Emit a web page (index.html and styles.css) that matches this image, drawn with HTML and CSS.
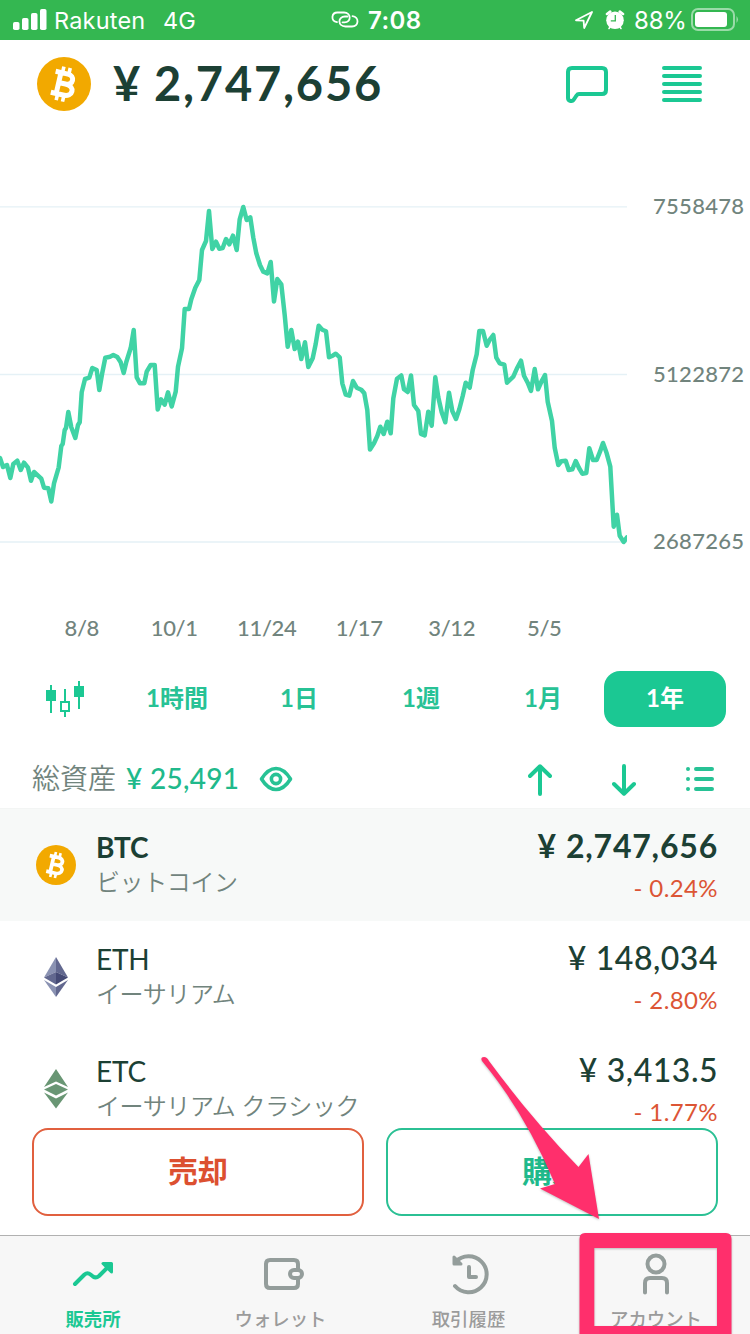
FILE: index.html
```html
<!DOCTYPE html>
<html lang="ja">
<head>
<meta charset="utf-8">
<meta name="viewport" content="width=750">
<title>販売所</title>
<link rel="stylesheet" href="styles.css">
</head>
<body>
<svg class="defs" width="0" height="0" aria-hidden="true">
  <symbol id="btc" viewBox="0 0 54 54">
    <circle cx="27" cy="27" r="27" fill="#f2a900"/>
    <g transform="rotate(13 27 27)" fill="none" stroke="#fff" stroke-width="5">
      <path d="M16 16.500H28.500C36.500 16.500 36.500 26.700 28.500 26.700H22.500M28.500 26.700C39 26.700 39 38 28.500 38H16M21.500 16.500V38"/>
      <path d="M23 10V16M29.500 10V16M23 38V44.500M29.500 38V44.500" stroke-width="3.600"/>
    </g>
  </symbol>
</svg>
<main class="screen">
  <header class="status">
    <div class="status-left">
      <svg width="34" height="22" viewBox="0 0 34 22" fill="#fff"><rect x="0" y="13" width="6.500" height="8" rx="1.800"/><rect x="9" y="9" width="6.500" height="12" rx="1.800"/><rect x="18" y="4" width="6.500" height="17" rx="1.800"/><rect x="27" y="0" width="6.500" height="21" rx="1.800"/></svg>
      <span class="carrier">Rakuten</span><span class="network">4G</span>
    </div>
    <div class="status-mid">
      <svg width="28" height="18" viewBox="0 0 28 18" fill="none" stroke="#fff" stroke-width="1.800" stroke-linecap="round"><path d="M6 11.200C-.5 10 .2 1.500 6.500 1.500H13C20.500 1.500 20.500 11.300 13.500 11.300H11.500"/><path d="M21.500 5.200C28.500 6 28 15.500 21 15.500H14.500C6.500 15.500 6.500 5.500 14 5.500H16.500"/></svg>
      <span class="time">7:08</span>
    </div>
    <div class="status-right">
      <svg class="loc" width="18" height="18" viewBox="0 0 18 18" fill="none" stroke="#fff" stroke-width="1.800" stroke-linejoin="round"><path d="M17 1L1 9.300L8.600 9.600L9.200 17Z"/></svg>
      <svg class="alarm" width="20" height="20" viewBox="0 0 20 20"><g stroke="#fff" stroke-width="2.600" stroke-linecap="round"><path d="M2 4L5.200 1.600M18 4L14.800 1.600"/><path d="M4 18.500L5.500 16.500M16 18.500L14.500 16.500" stroke-width="1.600"/></g><circle cx="10" cy="10.300" r="8.800" fill="#fff"/><path d="M10.300 5V10.800H5.800" fill="none" stroke="#34b751" stroke-width="1.300"/></svg>
      <span class="percent">88%</span>
      <svg width="48" height="24" viewBox="0 0 48 24"><rect x="1" y="1" width="42" height="21" rx="6" fill="none" stroke="#fff" stroke-opacity=".5" stroke-width="2"/><rect x="4" y="4" width="32" height="15" rx="3" fill="#fff"/><path d="M45.500 8Q48.500 11.500 45.500 15Z" fill="#fff" fill-opacity=".5"/></svg>
    </div>
  </header>

  <section class="headline">
    <svg class="coin-lg"><use href="#btc"/></svg>
    <div class="price"><span class="yen">¥</span><span class="amount">2,747,656</span></div>
    <svg class="chat" width="44" height="38" viewBox="0 0 44 38" fill="none" stroke="#1bc893" stroke-width="4" stroke-linejoin="round"><path d="M7 3H37Q41 3 41 7V25Q41 29 37 29H14Q12.500 29 11.500 30.500L8.500 35Q7.500 36.200 5.500 36Q3 35.500 3 33V7Q3 3 7 3Z"/></svg>
    <svg width="40" height="36" viewBox="0 0 40 36" stroke="#1bc893" stroke-width="4" stroke-linecap="round"><path d="M2 2H38M2 10H38M2 18H38M2 26H38M2 34H38"/></svg>
  </section>

  <section class="chart">
    <svg width="627" height="370" viewBox="0 190 627 370" fill="none">
      <path d="M0 206.800H627M0 374.500H627M0 542H627" stroke="#e5f1f6" stroke-width="1.300"/>
      <polyline stroke="#40d3a5" stroke-width="4.500" stroke-linejoin="round" stroke-linecap="round" points="0,458 3,467 7,465 10.300,478 13.300,464 17.300,460.700 20.700,470 24,462.700 28,467.700 31,480.700 34,472 41.300,478.700 44,487.700 48.300,488.300 51.300,501.500 54,483.300 58.700,467.300 61.300,446 62.700,444 64.700,430 66,428 68.300,412 71.300,427.300 75.300,438 78,425 79.700,422.300 81.700,392.300 85,379 89.300,377.700 92.300,368 96.700,370 99.300,390 102.300,372.700 105.300,357.700 110,356.700 113.300,355 117.300,357 120.700,362.300 123.700,373 126.300,362 130.700,348 133.700,330 136.700,377.300 140,383.300 144.300,383.300 146.700,371.700 150.700,365 154.700,365 157.700,409.500 161,399.300 164.700,404.700 168,392.300 171.700,406.500 175.700,391.700 178,366.700 182,348.300 184.700,309 189,309 191.300,299.300 195.300,287.700 199.300,280 202,250 206,241 209,211 212.300,249 216,241.700 219.300,248.700 222.700,248 226,239 229.300,244.300 233,235.700 236.700,250 239.700,219.300 243.300,207 246.700,220 250.300,217.300 253.300,237.700 256.300,253.300 260,265 263.300,271.700 267.300,273.300 270.700,262 274,301.500 277.300,279 281.300,284.300 284.700,315 287.700,346.700 291.300,330 294.700,349 298,341.700 301.300,359 305,342.300 308.300,367 312.700,358.300 315.700,344 318.700,325.700 322.300,329.700 326,331.300 329,357.300 332.700,355.700 335.700,353.700 339.700,357.300 342.300,383.300 345.700,394.700 349.300,395.700 353,381 356.700,387.700 361.300,389.700 364.300,393.300 367.300,410 370,449.500 374,443.300 377.300,436 380.300,426.700 383.700,434 387.300,421.700 390.700,433.300 393.300,398.300 397,378.700 401.300,375.500 404,389.300 407.700,392 411,375.500 414,405 418.300,411 421,434 424.700,435.500 428.300,411.700 431.700,425.700 435.300,377.300 438.300,397.300 441.700,412.300 445.300,422.300 449,392.700 452.300,411 456,419 459.300,409.300 462.700,396 465.700,382.700 469.700,387.700 472.700,370 476.700,354.300 479.300,331 483,331 486.700,345.700 490,339.300 493.300,335 496.300,357.700 499.700,363.300 504.300,364.700 507,382.700 513.300,376.700 517.300,367.700 521,360.700 524,375.700 527.700,382.700 531,391 534.700,369 538,389.300 541.700,381 545,375 547.700,401.700 552,421 554.700,447.700 558.300,465 561.300,461.300 565.700,460.700 568.700,470 572.300,469.300 575.700,461 579,468 582.300,473.700 586.300,473 589.300,448.300 593,460 596.700,460 600,451.700 603,443 606.700,453.300 610.300,466.700 613.700,526.700 617,514.700 619.700,535.700 623.700,542 627,537.300"/>
    </svg>
    <div class="y-axis"><span>7558478</span><span>5122872</span><span>2687265</span></div>
  </section>
  <div class="x-axis"><span>8/8</span><span>10/1</span><span>11/24</span><span>1/17</span><span>3/12</span><span>5/5</span></div>

  <nav class="periods">
    <a class="candle"><svg width="40" height="36" viewBox="0 0 40 36" fill="#1bc893"><path d="M1 9H11V20H7V32H5V20H1ZM5 4H7V9H5Z"/><path d="M19 8H21V20H25V31H21V36H19V31H15V20H19ZM17 22V29H23V22Z" fill-rule="evenodd"/><path d="M33 0H35V5H39V16H35V28H33V16H29V5H33Z"/></svg></a>
    <a>1時間</a><a>1日</a><a>1週</a><a>1月</a><a class="on">1年</a>
  </nav>

  <section class="assets">
    <span class="assets-label">総資産</span>
    <span class="assets-value">¥ 25,491</span>
    <svg class="eye" width="34" height="26" viewBox="0 0 34 26" fill="none" stroke="#27c295" stroke-width="3.600"><path d="M2.500 13Q9 2.500 17 2.500T31.500 13Q25 23.500 17 23.500T2.500 13Z" stroke-linejoin="round"/><circle cx="17" cy="13" r="4.600"/></svg>
    <svg class="up" width="24" height="32" viewBox="0 0 24 32" fill="none" stroke="#1bc893" stroke-width="4" stroke-linecap="round" stroke-linejoin="round"><path d="M12 30V2.500M2 12L12 2.300L22 12"/></svg>
    <svg class="down" width="24" height="32" viewBox="0 0 24 32" fill="none" stroke="#1bc893" stroke-width="4" stroke-linecap="round" stroke-linejoin="round"><path d="M12 2V29.500M2 20L12 29.700L22 20"/></svg>
    <svg width="30" height="26" viewBox="0 0 30 26" stroke="#27c295" stroke-width="4" stroke-linecap="round"><path d="M3 3H3.010M3 13H3.010M3 23H3.010M11 3H27M11 13H27M11 23H27"/></svg>
  </section>

  <section class="coins">
    <article class="coin selected">
      <svg class="coin-icon"><use href="#btc"/></svg>
      <div class="name"><b>BTC</b><span>ビットコイン</span></div>
      <div class="quote"><b><i>¥</i>2,747,656</b><span>- 0.24%</span></div>
    </article>
    <article class="coin">
      <svg class="coin-icon" viewBox="0 0 40 40"><path d="M20 0L8 20.500L20 15Z" fill="#8a92b2"/><path d="M20 0L32 20.500L20 15Z" fill="#62688f"/><path d="M8 20.500L20 15V27.500Z" fill="#62688f"/><path d="M32 20.500L20 15V27.500Z" fill="#454a75"/><path d="M8 23L20 30V40Z" fill="#8a92b2"/><path d="M32 23L20 30V40Z" fill="#62688f"/></svg>
      <div class="name"><b>ETH</b><span>イーサリアム</span></div>
      <div class="quote"><b><i>¥</i>148,034</b><span>- 2.80%</span></div>
    </article>
    <article class="coin">
      <svg class="coin-icon" viewBox="0 0 40 40" fill="#699674"><path d="M20 0L32 18L20 12.500L8 18ZM20 15L32 20.500L20 26.500L8 20.500ZM8 23.500L20 29.500L32 23.500L20 39.500Z"/></svg>
      <div class="name"><b>ETC</b><span>イーサリアム クラシック</span></div>
      <div class="quote"><b><i>¥</i>3,413.5</b><span>- 1.77%</span></div>
    </article>
  </section>

  <section class="actions"><button class="sell">売却</button><button class="buy">購入</button></section>

  <footer class="tabs">
    <a class="tab active"><svg width="44" height="44" viewBox="0 0 44 44" fill="none" stroke="#1bc893" stroke-width="4" stroke-linecap="round" stroke-linejoin="round"><path d="M4 33L13.500 23.500Q16.500 21 19.500 23.500L22 25.500Q25 27.500 28 25L38 15"/><path d="M32 12.500H40.500V21Z" fill="#1bc893" stroke-width="3"/></svg><span>販売所</span></a>
    <a class="tab"><svg width="48" height="44" viewBox="-2 0 48 44" fill="none" stroke="#949d9b" stroke-width="4"><path d="M39 18.500V13Q39 9 35 9H11Q7 9 7 13V33Q7 37 11 37H35Q39 37 39 33V27.500"/><rect x="31" y="19" width="12" height="8" rx="4"/></svg><span>ウォレット</span></a>
    <a class="tab"><svg width="44" height="44" viewBox="0 0 44 44" fill="none" stroke="#949d9b" stroke-width="4" stroke-linecap="round" stroke-linejoin="round"><path d="M8 35A18 18 0 1 0 8.500 11"/><path d="M7 6V13H14Z" fill="#949d9b" stroke-width="3"/><path d="M22 16V26H29"/></svg><span>取引履歴</span></a>
    <a class="tab"><svg width="44" height="44" viewBox="0 0 44 44" fill="none" stroke="#949d9b" stroke-width="4" stroke-linecap="round"><circle cx="22" cy="13" r="8.500"/><path d="M11 41.500V32Q11 27 16 27H28Q33 27 33 32V41.500"/></svg><span>アカウント</span></a>
  </footer>

  <svg class="marker" width="260" height="290" viewBox="475 1044 260 290">
    <path d="M482 1061Q480 1057 484 1057Q487 1057 489 1061Q531 1118 578.500 1167L588.500 1154L599 1219L540 1188.500L555 1184Q525 1113 482 1061Z" fill="#ff2f6c"/>
    <path d="M585 1233H726Q731.500 1233 731.500 1239V1334H579.500V1239Q579.500 1233 585 1233ZM594.300 1248V1326H717V1248Z" fill="#ff2f6c" fill-rule="evenodd"/>
  </svg>
</main>
</body>
</html>
```
FILE: styles.css
```css
* { box-sizing: border-box; }
body { margin: 0; background: #fff; }
svg { display: block; flex: none; }
.defs { position: absolute; }
.screen {
  position: relative;
  width: 750px;
  height: 1334px;
  overflow: hidden;
  display: flex;
  flex-direction: column;
  font-family: Lato, "Noto Sans CJK JP", sans-serif;
  color: #1c4034;
  white-space: nowrap;
}

.status {
  height: 40px;
  flex: none;
  background: #34b751;
  color: #fff;
  font: 400 24px/40px Inter, sans-serif;
  display: grid;
  grid-template-columns: 331px 1fr 175px;
}
.status-left, .status-mid, .status-right { display: flex; align-items: center; }
.status span { padding-top: 2px; line-height: 38px; }
.status-left { padding-left: 13px; }
.carrier { margin-left: 7px; width: 109px; font-size: 23.500px; letter-spacing: .2px; }
.network { font-size: 23.500px; }
.time { margin-left: 9px; font-weight: 600; letter-spacing: .4px; }
.alarm { margin-left: 12px; }
.percent { margin-left: 9px; width: 51px; letter-spacing: -.2px; }
.status-right svg:last-child { margin-left: 6px; }

.headline {
  height: 88px;
  flex: none;
  display: flex;
  align-items: center;
  padding: 0 48px 0 37px;
}
.coin-lg { width: 54px; height: 54px; }
.price {
  flex: 1;
  display: flex;
  padding: 0 0 3px 22px;
  font-size: 47px;
  line-height: 54px;
  font-weight: 700;
}
.yen { width: 41px; }
.amount { letter-spacing: 1.800px; }
.chat { margin-right: 53px; }

.chart { height: 370px; margin-top: 62px; flex: none; display: flex; }
.y-axis {
  height: 366px;
  padding: 1px 0 0 26px;
  display: flex;
  flex-direction: column;
  justify-content: space-between;
  font-size: 22px;
  line-height: 30px;
  letter-spacing: .3px;
  font-weight: 500;
  color: #71847d;
}
.x-axis {
  height: 36px;
  margin: 50px 0 0 35.500px;
  flex: none;
  display: grid;
  grid-template-columns: repeat(6, 92.500px);
  text-align: center;
  font-size: 22px;
  line-height: 36px;
  letter-spacing: -.3px;
  font-weight: 500;
  color: #71847d;
}

.periods {
  height: 56px;
  margin: 25px 24px 0 0;
  flex: none;
  display: grid;
  grid-template-columns: 116px repeat(5, 122px);
  font-size: 24px;
  line-height: 54px;
  font-weight: 700;
  color: #27c295;
  text-align: center;
}
.candle { padding: 10px 0 0 45px; }
.on { color: #fff; background: #1bc893; border-radius: 16px; }

.assets {
  height: 82px;
  flex: none;
  display: flex;
  align-items: center;
  padding: 22px 35px 0 32px;
  border-bottom: 1px solid #f3f5f4;
}
.assets-label, .assets-value { font-size: 28px; line-height: 38px; padding-bottom: 2px; }
.assets-label { color: #71847d; font-weight: 350; width: 94px; }
.assets-value { color: #20b98b; font-weight: 500; letter-spacing: .3px; width: 133px; }
.up { margin: 2px 0 0 auto; }
.down { margin: 2px 49px 0 60px; }

.coins { height: 319px; overflow: hidden; flex: none; }
.coin { height: 112px; display: flex; padding: 0 32px 0 36px; }
.selected { background: #f7f9f8; }
.coin-icon { width: 40px; height: 40px; margin: 36px 20px 0 0; }
.name { flex: 1; display: flex; flex-direction: column; }
.name b { font-size: 28px; line-height: 34px; margin-top: 21px; font-weight: 400; letter-spacing: -.2px; }
.selected .name b { font-weight: 700; }
.name span { font-size: 24px; line-height: 34px; margin-top: 1px; font-weight: 350; letter-spacing: -.4px; color: #71847d; }
.quote { display: flex; flex-direction: column; align-items: flex-end; }
.quote b { font-size: 32px; line-height: 38px; margin-top: 18px; font-weight: 500; letter-spacing: .5px; }
.quote i { font-style: normal; margin-right: 9px; }
.selected .quote b { font-weight: 700; letter-spacing: .8px; }
.quote span { font-size: 24px; line-height: 30px; margin-top: 8px; letter-spacing: .4px; color: #dc5535; }

.actions { height: 107px; flex: none; padding: 0 32px; display: flex; gap: 22px; }
.actions button {
  flex: 1;
  height: 88px;
  padding: 0 0 6px;
  background: #fff;
  border: 2px solid;
  border-radius: 16px;
  font: 700 30px/40px "Noto Sans CJK JP", sans-serif;
}
.actions .sell { color: #dc5030; border-color: #e1603f; }
.actions .buy { color: #20b98b; border-color: #2bc094; }

.tabs {
  height: 99px;
  flex: none;
  background: #f7f7f7;
  border-top: 1px solid #b1b1b1;
  display: grid;
  grid-template-columns: 186px 189px 187px 188px;
}
.tab { display: flex; flex-direction: column; align-items: center; padding-top: 15px; color: #9b9b9b; }
.tab span { font-size: 18.400px; line-height: 26px; margin-top: 11px; font-weight: 500; }
.active { color: #1bc893; }
.active span { font-weight: 700; }

.marker { position: absolute; left: 475px; top: 1044px; filter: drop-shadow(0 1px 1px rgba(0, 0, 0, .25)); }
```
